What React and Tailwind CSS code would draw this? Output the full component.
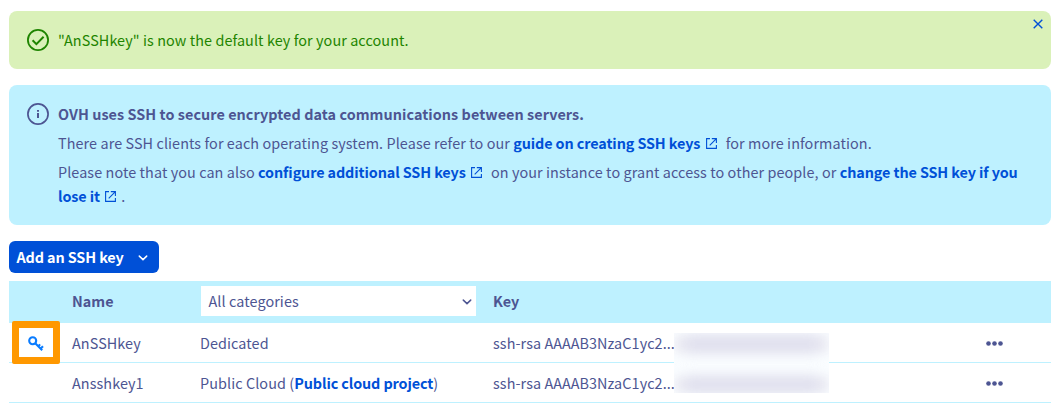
const External = ({ className = '' }) => (
  <svg viewBox="0 0 11 11" fill="none" stroke="currentColor" strokeWidth="1.1" className={`inline-block h-[11px] w-[11px] align-[0.5px] text-[#0050d7] ${className}`}>
    <path d="M4 .6H.6v9.8h9.8V7M5.8.6h4.6v4.3M10.4.6 3.7 7.3" />
  </svg>
);

const Chevron = ({ className = '' }) => (
  <svg viewBox="0 0 10 6" fill="none" stroke="currentColor" strokeWidth="1.5" strokeLinecap="round" className={`h-1.5 w-2.5 ${className}`}>
    <path d="M1.3 1.1 5 4.6 8.7 1.1" />
  </svg>
);

const Link = ({ children }) => (
  <a href="#" className="font-bold tracking-[-0.11px] text-[#0050d7]">{children}</a>
);

const Dots = () => (
  <svg viewBox="0 0 17 5" fill="currentColor" className="mt-px h-[5px] w-[17px]">
    <circle cx="2.5" cy="2.5" r="2.3" />
    <circle cx="8.5" cy="2.5" r="2.3" />
    <circle cx="14.5" cy="2.5" r="2.3" />
  </svg>
);

const KeyIcon = () => (
  <svg viewBox="0 0 16 16" fill="none" stroke="currentColor" className="mt-0.5 h-4 w-4 text-[#0a7cff]">
    <circle cx="4.7" cy="4.7" r="3.5" strokeWidth="2.1" />
    <path d="m7 7 7.2 7.2M10.4 10.2l1.7-1.8M12.7 12.5l2.3-2.3" strokeWidth="2.1" />
  </svg>
);

const HiddenKey = ({ className = '' }) => (
  <div className={`bg-[#ececf4] blur-[5px] ${className}`}>
    <div className="mx-auto h-full w-[132px] bg-[#e0e0ee] blur-[4px]" />
  </div>
);

const rows = [
  { name: 'AnSSHkey', category: 'Dedicated', isDefault: true },
  { name: 'Ansshkey1', category: 'Public Cloud (', project: 'Public cloud project' },
];

export default function App() {
  return (
    <div className="h-[406px] w-[1060px] overflow-hidden bg-white pt-[11px] pl-[9px] font-['Noto_Sans_CJK_JP','Noto_Sans',sans-serif] text-[14.4px] leading-6 tracking-[0.083px] whitespace-nowrap text-[#4d5592]">
      <div className="w-[1042px]">
        <div className="flex h-[58px] items-center rounded-lg bg-[#daf1b9] pl-[18px] text-[#1e8400]">
          <svg viewBox="0 0 22 22" fill="none" stroke="currentColor" className="h-[22px] w-[22px]">
            <circle cx="11" cy="11" r="10.1" strokeWidth="1.8" />
            <path d="m5.6 11.2 3.8 3.9 7.2-7.4" strokeWidth="2" />
          </svg>
          <p className="ml-[9px]">"AnSSHkey" is now the default key for your account.</p>
          <svg viewBox="0 0 10 10" stroke="currentColor" strokeWidth="1.4" className="mt-2 mr-2 ml-auto h-2.5 w-2.5 self-start text-[#0050d7]">
            <path d="m.7.7 8.6 8.6M9.3.7.7 9.3" />
          </svg>
        </div>

        <div className="mt-4 flex h-[140px] rounded-lg bg-[#bef1ff] pt-[17px] pl-[18px]">
          <svg viewBox="0 0 22 22" fill="none" stroke="currentColor" className="mt-px h-[22px] w-[22px]">
            <circle cx="11" cy="11" r="10.1" strokeWidth="1.7" />
            <path d="M11 10v5M11 7v1.8" strokeWidth="2" />
          </svg>
          <div className="ml-[9px] flex flex-col gap-[5px]">
            <p className="font-bold tracking-[0.055px]">OVH uses SSH to secure encrypted data communications between servers.</p>
            <p>
              There are SSH clients for each operating system. Please refer to our <Link>guide on creating SSH keys</Link>
              <External className="mr-[5.5px] ml-[5.5px]" /> for more information.
            </p>
            <p>
              Please note that you can also <Link>configure additional SSH keys</Link>
              <External className="mr-[5.5px] ml-[5.5px]" /> on your instance to grant access to other people, or <Link>change the SSH key if you<br />lose it</Link>
              <External className="mr-[1.5px] ml-[5.5px]" /> .
            </p>
          </div>
        </div>

        <button className="mt-4 flex h-8 w-[150px] items-center rounded-md bg-[#0050d7] pl-[7.5px] font-bold tracking-[-0.11px] text-white">
          Add an SSH key
          <Chevron className="mt-px mr-[11px] ml-auto" />
        </button>

        <div className="mt-2 grid h-[42px] grid-cols-[63px_129px_292px_1fr] items-center bg-[#bef1ff] pb-0.5 font-bold tracking-normal">
          <span />
          <span>Name</span>
          <div className="flex h-[30px] w-[275px] items-center justify-between bg-white pr-1 pl-[7.5px] font-normal tracking-[0.083px]">
            All categories
            <Chevron className="mt-px" />
          </div>
          <span>Key</span>
        </div>

        <div className="relative">
          {rows.map((row) => (
            <div key={row.name} className="grid h-10 grid-cols-[63px_128px_293px_1fr_65px] items-center border-b border-[#bef1ff]">
              <span className="pl-[19px]">{row.isDefault && <KeyIcon />}</span>
              <span>{row.name}</span>
              <span>
                {row.category}
                {row.project && <><Link>{row.project}</Link>)</>}
              </span>
              <span>ssh-rsa AAAAB3NzaC1yc2...</span>
              <Dots />
            </div>
          ))}
          <div className="absolute -top-0.5 left-[3px] h-[43px] w-12 rounded-[2px] border-[7px] border-[#ff9800]" />
          <div className="absolute top-[10px] left-[665px] flex h-[60px] w-[155px] flex-col justify-between overflow-hidden bg-[#fafdff]">
            <HiddenKey className="mt-0.5 h-[18px]" />
            <HiddenKey className="h-[17px]" />
          </div>
        </div>
      </div>
    </div>
  );
}
